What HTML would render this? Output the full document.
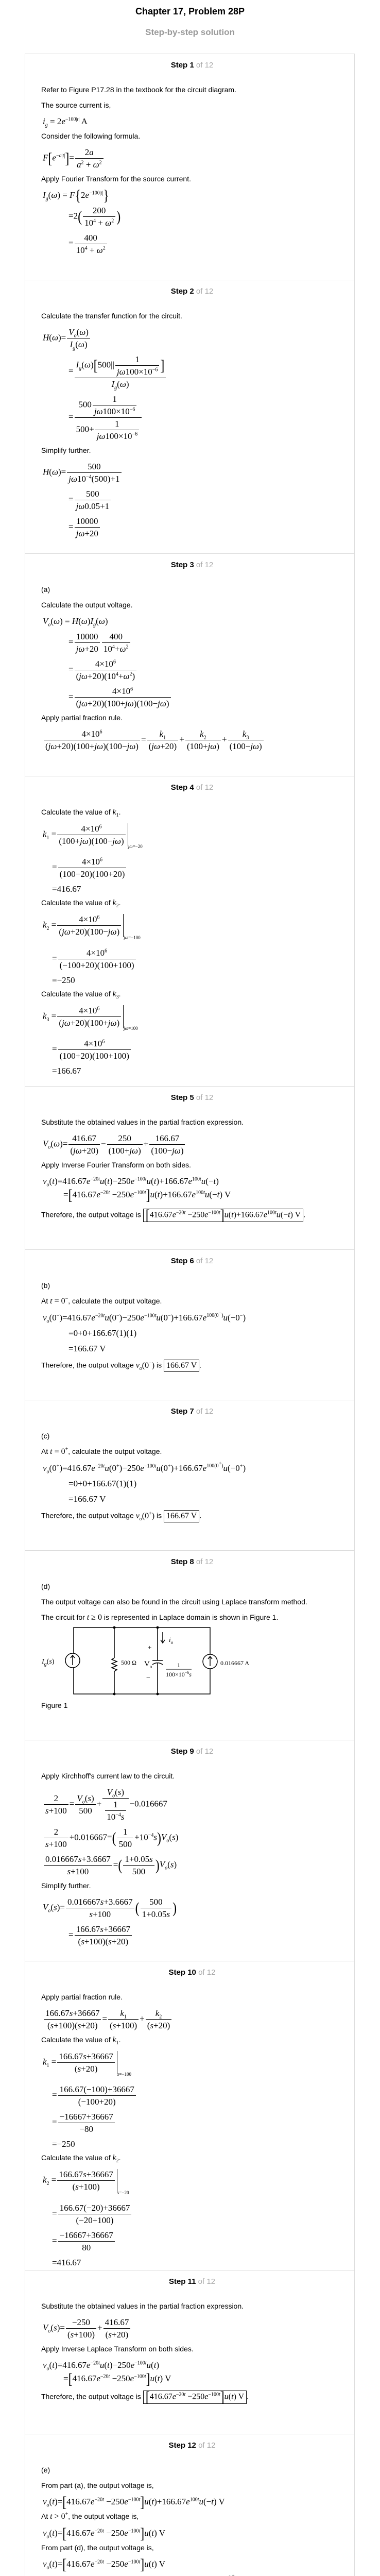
<!DOCTYPE html>
<html><head><meta charset="utf-8">
<style>
*{box-sizing:border-box}
html{overflow:hidden;height:5112px}
body{margin:0;width:738px;height:5112px;background:#fff;position:relative;font-family:"Liberation Sans",Arial,sans-serif;font-size:14px;color:#000;overflow:hidden}
.title{position:absolute;top:12px;left:0;width:738px;text-align:center;font-weight:bold;font-size:18px}
.sub{position:absolute;top:53px;left:0;width:738px;text-align:center;font-weight:bold;font-size:17px;color:#999}
.card{position:absolute;left:48px;top:104px;width:641px;height:4982px;border:1px solid #ddd;overflow:hidden}
.sec{position:absolute;left:0;width:639px;padding-left:31px;overflow:hidden}
.sec.bt{border-top:1px solid #ddd}
.hd{text-align:center;font-weight:bold;font-size:15px;margin-top:13px;margin-bottom:30px;padding-right:22px;height:17px}
.hd span{font-weight:normal;color:#aaa}
p{margin:0 0 12px 0;line-height:18px}
.m{font-family:"Liberation Serif",serif;font-size:17px;margin:4px 0 8px 3px;white-space:nowrap;line-height:22px}
.ind{padding-left:50px}
.ind2{padding-left:18px}
i{font-style:italic}
.f{display:inline-block;vertical-align:middle;text-align:center;margin:0 2px}
.f>.n{display:block;border-bottom:1px solid #000;padding:0 3px 1px;line-height:21px}
.f>.d{display:block;padding:1px 3px 0;line-height:21px}
sup,sub{font-size:10px;line-height:0}
.bp{font-size:24px;vertical-align:middle;line-height:20px;font-weight:lighter;display:inline-block;transform:scaleY(1.25)}
.box{border:1px solid #000;padding:2px 4px;display:inline-block;vertical-align:middle}
.ev{display:inline-block;vertical-align:middle;border-right:1px solid #000;padding-right:2px}
.evs{font-size:9px;display:inline-block;vertical-align:-22px}
.mi{font-family:"Liberation Serif",serif;font-size:16px}
</style></head><body>
<div class="title">Chapter 17, Problem 28P</div>
<div class="sub">Step-by-step solution</div>
<div class="card">

<div class="sec" style="top:0;height:438px">
<div class="hd">Step 1 <span>of 12</span></div>
<p>Refer to Figure P17.28 in the textbook for the circuit diagram.</p>
<p>The source current is,</p>
<div class="m"><i>i<sub>g</sub></i> = 2<i>e</i><sup>−100|<i>t</i>|</sup> A</div>
<p>Consider the following formula.</p>
<div class="m"><i>F</i><span class="bp">[</span><i>e</i><sup>−<i>a</i>|<i>t</i>|</sup><span class="bp">]</span>=<span class="f"><span class="n">2<i>a</i></span><span class="d"><i>a</i><sup>2</sup> + <i>ω</i><sup>2</sup></span></span></div>
<p>Apply Fourier Transform for the source current.</p>
<div class="m"><i>I<sub>g</sub></i>(<i>ω</i>) = <i>F</i><span class="bp">{</span>2<i>e</i><sup>−100|<i>t</i>|</sup><span class="bp">}</span></div>
<div class="m ind">=2<span class="bp">(</span><span class="f"><span class="n">200</span><span class="d">10<sup>4</sup> + <i>ω</i><sup>2</sup></span></span><span class="bp">)</span></div>
<div class="m ind">=<span class="f"><span class="n">400</span><span class="d">10<sup>4</sup> + <i>ω</i><sup>2</sup></span></span></div>
</div>

<div class="sec bt" style="top:438px;height:531px">
<div class="hd">Step 2 <span>of 12</span></div>
<p>Calculate the transfer function for the circuit.</p>
<div class="m"><i>H</i>(<i>ω</i>)=<span class="f"><span class="n"><i>V<sub>o</sub></i>(<i>ω</i>)</span><span class="d"><i>I<sub>g</sub></i>(<i>ω</i>)</span></span></div>
<div class="m ind">=<span class="f"><span class="n"><i>I<sub>g</sub></i>(<i>ω</i>)<span class="bp">[</span>500||<span class="f"><span class="n">1</span><span class="d"><i>jω</i>100×10<sup>−6</sup></span></span><span class="bp">]</span></span><span class="d"><i>I<sub>g</sub></i>(<i>ω</i>)</span></span></div>
<div class="m ind">=<span class="f"><span class="n">500<span class="f"><span class="n">1</span><span class="d"><i>jω</i>100×10<sup>−6</sup></span></span></span><span class="d">500+<span class="f"><span class="n">1</span><span class="d"><i>jω</i>100×10<sup>−6</sup></span></span></span></span></div>
<p>Simplify further.</p>
<div class="m"><i>H</i>(<i>ω</i>)=<span class="f"><span class="n">500</span><span class="d"><i>jω</i>10<sup>−4</sup>(500)+1</span></span></div>
<div class="m ind">=<span class="f"><span class="n">500</span><span class="d"><i>jω</i>0.05+1</span></span></div>
<div class="m ind">=<span class="f"><span class="n">10000</span><span class="d"><i>jω</i>+20</span></span></div>
</div>

<div class="sec bt" style="top:969px;height:432px">
<div class="hd">Step 3 <span>of 12</span></div>
<p>(a)</p>
<p>Calculate the output voltage.</p>
<div class="m"><i>V<sub>o</sub></i>(<i>ω</i>) = <i>H</i>(<i>ω</i>)<i>I<sub>g</sub></i>(<i>ω</i>)</div>
<div class="m ind">=<span class="f"><span class="n">10000</span><span class="d"><i>jω</i>+20</span></span><span class="f"><span class="n">400</span><span class="d">10<sup>4</sup>+<i>ω</i><sup>2</sup></span></span></div>
<div class="m ind">=<span class="f"><span class="n">4×10<sup>6</sup></span><span class="d">(<i>jω</i>+20)(10<sup>4</sup>+<i>ω</i><sup>2</sup>)</span></span></div>
<div class="m ind">=<span class="f"><span class="n">4×10<sup>6</sup></span><span class="d">(<i>jω</i>+20)(100+<i>jω</i>)(100−<i>jω</i>)</span></span></div>
<p>Apply partial fraction rule.</p>
<div class="m"><span class="f"><span class="n">4×10<sup>6</sup></span><span class="d">(<i>jω</i>+20)(100+<i>jω</i>)(100−<i>jω</i>)</span></span>=<span class="f"><span class="n"><i>k</i><sub>1</sub></span><span class="d">(<i>jω</i>+20)</span></span>+<span class="f"><span class="n"><i>k</i><sub>2</sub></span><span class="d">(100+<i>jω</i>)</span></span>+<span class="f"><span class="n"><i>k</i><sub>3</sub></span><span class="d">(100−<i>jω</i>)</span></span></div>
</div>

<div class="sec bt" style="top:1401px;height:602px">
<div class="hd">Step 4 <span>of 12</span></div>
<p>Calculate the value of <span class="mi"><i>k</i><sub>1</sub></span>.</p>
<div class="m"><i>k</i><sub>1</sub> =<span class="ev"><span class="f"><span class="n">4×10<sup>6</sup></span><span class="d">(100+<i>jω</i>)(100−<i>jω</i>)</span></span></span><span class="evs"><i>jω</i>=−20</span></div>
<div class="m ind2">=<span class="f"><span class="n">4×10<sup>6</sup></span><span class="d">(100−20)(100+20)</span></span></div>
<div class="m ind2" style="margin-bottom:6px">=416.67</div>
<p>Calculate the value of <span class="mi"><i>k</i><sub>2</sub></span>.</p>
<div class="m"><i>k</i><sub>2</sub> =<span class="ev"><span class="f"><span class="n">4×10<sup>6</sup></span><span class="d">(<i>jω</i>+20)(100−<i>jω</i>)</span></span></span><span class="evs"><i>jω</i>=−100</span></div>
<div class="m ind2">=<span class="f"><span class="n">4×10<sup>6</sup></span><span class="d">(−100+20)(100+100)</span></span></div>
<div class="m ind2" style="margin-bottom:6px">=−250</div>
<p>Calculate the value of <span class="mi"><i>k</i><sub>3</sub></span>.</p>
<div class="m"><i>k</i><sub>3</sub> =<span class="ev"><span class="f"><span class="n">4×10<sup>6</sup></span><span class="d">(<i>jω</i>+20)(100+<i>jω</i>)</span></span></span><span class="evs"><i>jω</i>=100</span></div>
<div class="m ind2">=<span class="f"><span class="n">4×10<sup>6</sup></span><span class="d">(100+20)(100+100)</span></span></div>
<div class="m ind2">=166.67</div>
</div>

<div class="sec bt" style="top:2003px;height:317px">
<div class="hd">Step 5 <span>of 12</span></div>
<p>Substitute the obtained values in the partial fraction expression.</p>
<div class="m"><i>V<sub>o</sub></i>(<i>ω</i>)=<span class="f"><span class="n">416.67</span><span class="d">(<i>jω</i>+20)</span></span>−<span class="f"><span class="n">250</span><span class="d">(100+<i>jω</i>)</span></span>+<span class="f"><span class="n">166.67</span><span class="d">(100−<i>jω</i>)</span></span></div>
<p>Apply Inverse Fourier Transform on both sides.</p>
<div class="m" style="margin-bottom:2px"><i>v<sub>o</sub></i>(<i>t</i>)=416.67<i>e</i><sup>−20<i>t</i></sup><i>u</i>(<i>t</i>)−250<i>e</i><sup>−100<i>t</i></sup><i>u</i>(<i>t</i>)+166.67<i>e</i><sup>100<i>t</i></sup><i>u</i>(−<i>t</i>)</div>
<div class="m" style="padding-left:40px">=<span class="bp">[</span>416.67<i>e</i><sup>−20<i>t</i></sup> −250<i>e</i><sup>−100<i>t</i></sup><span class="bp">]</span><i>u</i>(<i>t</i>)+166.67<i>e</i><sup>100<i>t</i></sup><i>u</i>(−<i>t</i>) V</div>
<p style="margin-top:16px">Therefore, the output voltage is <span class="box mi"><span class="bp">[</span>416.67<i>e</i><sup>−20<i>t</i></sup> −250<i>e</i><sup>−100<i>t</i></sup><span class="bp">]</span><i>u</i>(<i>t</i>)+166.67<i>e</i><sup>100<i>t</i></sup><i>u</i>(−<i>t</i>) V</span>.</p>
</div>

<div class="sec bt" style="top:2320px;height:292px">
<div class="hd">Step 6 <span>of 12</span></div>
<p>(b)</p>
<p>At <span class="mi"><i>t</i> = 0<sup>−</sup></span>, calculate the output voltage.</p>
<div class="m"><i>v<sub>o</sub></i>(0<sup>−</sup>)=416.67<i>e</i><sup>−20<i>t</i></sup><i>u</i>(0<sup>−</sup>)−250<i>e</i><sup>−100<i>t</i></sup><i>u</i>(0<sup>−</sup>)+166.67<i>e</i><sup>100(0<sup>−</sup>)</sup><i>u</i>(−0<sup>−</sup>)</div>
<div class="m ind">=0+0+166.67(1)(1)</div>
<div class="m ind">=166.67 V</div>
<p style="margin-top:10px">Therefore, the output voltage <span class="mi"><i>v<sub>o</sub></i>(0<sup>−</sup>)</span> is <span class="box mi">166.67 V</span>.</p>
</div>

<div class="sec bt" style="top:2612px;height:292px">
<div class="hd">Step 7 <span>of 12</span></div>
<p>(c)</p>
<p>At <span class="mi"><i>t</i> = 0<sup>+</sup></span>, calculate the output voltage.</p>
<div class="m"><i>v<sub>o</sub></i>(0<sup>+</sup>)=416.67<i>e</i><sup>−20<i>t</i></sup><i>u</i>(0<sup>+</sup>)−250<i>e</i><sup>−100<i>t</i></sup><i>u</i>(0<sup>+</sup>)+166.67<i>e</i><sup>100(0<sup>+</sup>)</sup><i>u</i>(−0<sup>+</sup>)</div>
<div class="m ind">=0+0+166.67(1)(1)</div>
<div class="m ind">=166.67 V</div>
<p style="margin-top:10px">Therefore, the output voltage <span class="mi"><i>v<sub>o</sub></i>(0<sup>+</sup>)</span> is <span class="box mi">166.67 V</span>.</p>
</div>

<div class="sec bt" style="top:2904px;height:368px">
<div class="hd">Step 8 <span>of 12</span></div>
<p>(d)</p>
<p>The output voltage can also be found in the circuit using Laplace transform method.</p>
<p>The circuit for <span class="mi"><i>t</i> ≥ 0</span> is represented in Laplace domain is shown in Figure 1.</p>
<div style="position:absolute;left:31px;top:292px">Figure 1</div>
</div>

<div class="sec bt" style="top:3272px;height:429px">
<div class="hd">Step 9 <span>of 12</span></div>
<p>Apply Kirchhoff's current law to the circuit.</p>
<div class="m"><span class="f"><span class="n">2</span><span class="d"><i>s</i>+100</span></span>=<span class="f"><span class="n"><i>V<sub>o</sub></i>(<i>s</i>)</span><span class="d">500</span></span>+<span class="f"><span class="n"><i>V<sub>o</sub></i>(<i>s</i>)</span><span class="d"><span class="f"><span class="n">1</span><span class="d">10<sup>−4</sup><i>s</i></span></span></span></span>−0.016667</div>
<div class="m"><span class="f"><span class="n">2</span><span class="d"><i>s</i>+100</span></span>+0.016667=<span class="bp">(</span><span class="f"><span class="n">1</span><span class="d">500</span></span>+10<sup>−4</sup><i>s</i><span class="bp">)</span><i>V<sub>o</sub></i>(<i>s</i>)</div>
<div class="m"><span class="f"><span class="n">0.016667<i>s</i>+3.6667</span><span class="d"><i>s</i>+100</span></span>=<span class="bp">(</span><span class="f"><span class="n">1+0.05<i>s</i></span><span class="d">500</span></span><span class="bp">)</span><i>V<sub>o</sub></i>(<i>s</i>)</div>
<p>Simplify further.</p>
<div class="m"><i>V<sub>o</sub></i>(<i>s</i>)=<span class="f"><span class="n">0.016667<i>s</i>+3.6667</span><span class="d"><i>s</i>+100</span></span><span class="bp">(</span><span class="f"><span class="n">500</span><span class="d">1+0.05<i>s</i></span></span><span class="bp">)</span></div>
<div class="m ind">=<span class="f"><span class="n">166.67<i>s</i>+36667</span><span class="d">(<i>s</i>+100)(<i>s</i>+20)</span></span></div>
</div>

<div class="sec bt" style="top:3701px;height:600px">
<div class="hd">Step 10 <span>of 12</span></div>
<p>Apply partial fraction rule.</p>
<div class="m"><span class="f"><span class="n">166.67<i>s</i>+36667</span><span class="d">(<i>s</i>+100)(<i>s</i>+20)</span></span>=<span class="f"><span class="n"><i>k</i><sub>1</sub></span><span class="d">(<i>s</i>+100)</span></span>+<span class="f"><span class="n"><i>k</i><sub>2</sub></span><span class="d">(<i>s</i>+20)</span></span></div>
<p>Calculate the value of <span class="mi"><i>k</i><sub>1</sub></span>.</p>
<div class="m"><i>k</i><sub>1</sub> =<span class="ev"><span class="f"><span class="n">166.67<i>s</i>+36667</span><span class="d">(<i>s</i>+20)</span></span></span><span class="evs"><i>s</i>=−100</span></div>
<div class="m ind2">=<span class="f"><span class="n">166.67(−100)+36667</span><span class="d">(−100+20)</span></span></div>
<div class="m ind2">=<span class="f"><span class="n">−16667+36667</span><span class="d">−80</span></span></div>
<div class="m ind2" style="margin-bottom:6px">=−250</div>
<p>Calculate the value of <span class="mi"><i>k</i><sub>2</sub></span>.</p>
<div class="m"><i>k</i><sub>2</sub> =<span class="ev"><span class="f"><span class="n">166.67<i>s</i>+36667</span><span class="d">(<i>s</i>+100)</span></span></span><span class="evs"><i>s</i>=−20</span></div>
<div class="m ind2">=<span class="f"><span class="n">166.67(−20)+36667</span><span class="d">(−20+100)</span></span></div>
<div class="m ind2">=<span class="f"><span class="n">−16667+36667</span><span class="d">80</span></span></div>
<div class="m ind2">=416.67</div>
</div>

<div class="sec bt" style="top:4301px;height:318px">
<div class="hd">Step 11 <span>of 12</span></div>
<p>Substitute the obtained values in the partial fraction expression.</p>
<div class="m"><i>V<sub>o</sub></i>(<i>s</i>)=<span class="f"><span class="n">−250</span><span class="d">(<i>s</i>+100)</span></span>+<span class="f"><span class="n">416.67</span><span class="d">(<i>s</i>+20)</span></span></div>
<p>Apply Inverse Laplace Transform on both sides.</p>
<div class="m" style="margin-bottom:2px"><i>v<sub>o</sub></i>(<i>t</i>)=416.67<i>e</i><sup>−20<i>t</i></sup><i>u</i>(<i>t</i>)−250<i>e</i><sup>−100<i>t</i></sup><i>u</i>(<i>t</i>)</div>
<div class="m" style="padding-left:40px">=<span class="bp">[</span>416.67<i>e</i><sup>−20<i>t</i></sup> −250<i>e</i><sup>−100<i>t</i></sup><span class="bp">]</span><i>u</i>(<i>t</i>) V</div>
<p style="margin-top:12px">Therefore, the output voltage is <span class="box mi"><span class="bp">[</span>416.67<i>e</i><sup>−20<i>t</i></sup> −250<i>e</i><sup>−100<i>t</i></sup><span class="bp">]</span><i>u</i>(<i>t</i>) V</span>.</p>
</div>

<div class="sec bt" style="top:4619px;height:361px">
<div class="hd">Step 12 <span>of 12</span></div>
<p>(e)</p>
<p>From part (a), the output voltage is,</p>
<div class="m"><i>v<sub>o</sub></i>(<i>t</i>)=<span class="bp">[</span>416.67<i>e</i><sup>−20<i>t</i></sup> −250<i>e</i><sup>−100<i>t</i></sup><span class="bp">]</span><i>u</i>(<i>t</i>)+166.67<i>e</i><sup>100<i>t</i></sup><i>u</i>(−<i>t</i>) V</div>
<p>At <span class="mi"><i>t</i> &gt; 0<sup>+</sup></span>, the output voltage is,</p>
<div class="m"><i>v<sub>o</sub></i>(<i>t</i>)=<span class="bp">[</span>416.67<i>e</i><sup>−20<i>t</i></sup> −250<i>e</i><sup>−100<i>t</i></sup><span class="bp">]</span><i>u</i>(<i>t</i>) V</div>
<p>From part (d), the output voltage is,</p>
<div class="m"><i>v<sub>o</sub></i>(<i>t</i>)=<span class="bp">[</span>416.67<i>e</i><sup>−20<i>t</i></sup> −250<i>e</i><sup>−100<i>t</i></sup><span class="bp">]</span><i>u</i>(<i>t</i>) V</div>
<p><b>Yes</b>, the solution obtained in part (d) agrees with <span class="mi"><i>v<sub>o</sub></i></span> for <span class="mi"><i>t</i> &gt; 0<sup>+</sup></span> obtained in part (a).</p>
</div>
</div>

<svg style="position:absolute;left:0;top:3140px" width="738" height="170" xmlns="http://www.w3.org/2000/svg" font-family="Liberation Serif, serif">
<g stroke="#000" stroke-width="1.5" fill="none">
<rect x="143" y="19" width="265" height="129"/>
<line x1="222" y1="19" x2="222" y2="78"/>
<polyline points="222,78 217,81 227,85 217,89 227,93 217,97 227,101 222,104"/>
<line x1="222" y1="104" x2="222" y2="148"/>
<line x1="306" y1="19" x2="306" y2="83"/>
<line x1="296" y1="83" x2="316" y2="83"/>
<path d="M296,91 Q306,84 316,91"/>
<line x1="306" y1="88" x2="306" y2="148"/>
<circle cx="141" cy="83" r="14" fill="#fff"/>
<line x1="141" y1="92" x2="141" y2="74"/>
<polyline points="137,78 141,73 145,78"/>
<circle cx="408" cy="85" r="14" fill="#fff"/>
<line x1="408" y1="94" x2="408" y2="76"/>
<polyline points="404,80 408,75 412,80"/>
<line x1="316" y1="28" x2="316" y2="48"/>
<polyline points="312,43 316,49 320,43"/>
<line x1="322" y1="100" x2="372" y2="100" stroke-width="1"/>
</g>
<g fill="#000">
<circle cx="222" cy="19" r="2.5"/><circle cx="306" cy="19" r="2.5"/>
<circle cx="222" cy="148" r="2.5"/><circle cx="306" cy="148" r="2.5"/>
</g>
<g font-size="14">
<text x="81" y="89" font-style="italic">I<tspan font-size="10" dy="4">g</tspan><tspan dy="-4" font-style="normal">(</tspan>s<tspan font-style="normal">)</tspan></text>
<text x="235" y="91" font-size="12">500 Ω</text>
<text x="280" y="94" font-size="15">V<tspan font-size="9" dy="4">o</tspan></text>
<text x="287" y="62" font-size="13">+</text>
<text x="284" y="120" font-size="14">−</text>
<text x="328" y="47" font-style="italic" font-size="13">i<tspan font-size="9" dy="4">o</tspan></text>
<text x="344" y="96" font-size="12">1</text>
<text x="322" y="114" font-size="12">100×10<tspan font-size="8" dy="-5">−6</tspan><tspan dy="5" font-style="italic">s</tspan></text>
<text x="428" y="92" font-size="12">0.016667 A</text>
</g>
</svg>
</body></html>
